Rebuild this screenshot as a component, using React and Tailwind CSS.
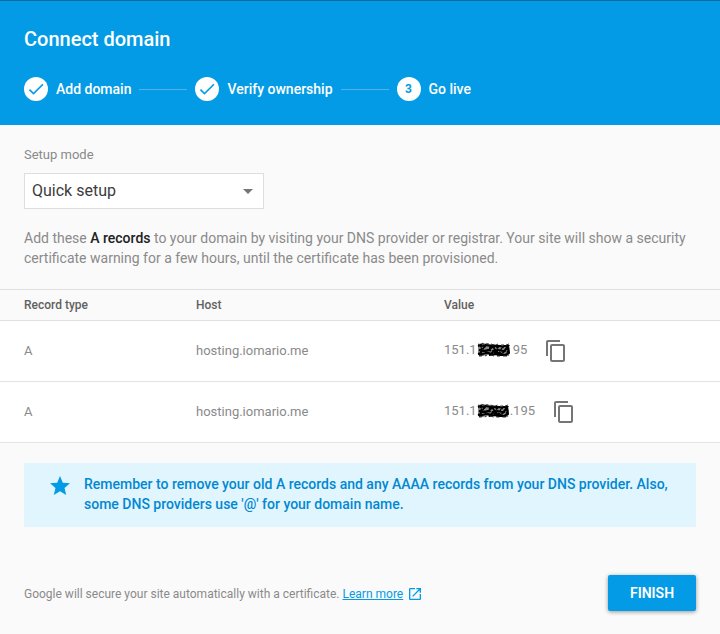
import React from "react";

const records = [
  { id: 1, type: "A", host: "hosting.iomario.me", start: "151.1", end: "95", scribbleClass: "mr-[3px] h-4 w-[33px]" },
  { id: 2, type: "A", host: "hosting.iomario.me", start: "151.1", end: ".195", scribbleClass: "mr-px h-4 w-8" },
];

function StepBadge({ children }) {
  return (
    <span className="flex size-6 shrink-0 items-center justify-center rounded-full bg-white text-xs font-bold text-[#039be5]">
      {children}
    </span>
  );
}

function Check() {
  return (
    <svg viewBox="0 0 24 24" className="size-5" fill="currentColor" aria-hidden="true">
      <path d="M9 16.17 4.83 12l-1.42 1.41L9 19 21 7l-1.41-1.41z" />
    </svg>
  );
}

function Connector() {
  return <span className="mx-2 h-px w-12 bg-[#4fb3ea]" aria-hidden="true" />;
}

function Scribble({ className }) {
  return (
    <svg viewBox="0 0 33 16" preserveAspectRatio="none" className={className} aria-hidden="true">
      <path d="M1 2l5-1 5 1 6 0 6 1 9 0 1 5-1 6-8 0-6-1-7 0-6 1-4-1 0-5z" fill="#888" />
      <path
        d="M1 4l3-1 0 8-3 1M4 4l5-1-3 4 4 4-5 1M9 3l5 1-2 4 4-4 2 4-4 4-5-2M17 4l5 0-4 4 5 3-6 0M23 4l3 1-2 3 3 3M26 4l5 0-3 4 4 3-4 2M31 5l1 6M2 8l5 1 4-1 5 1 5-1 5 1 6-1M2 13l5-1M12 13l8-1M20 13l10 0"
        fill="none"
        stroke="#000"
        strokeWidth="2"
      />
      <path
        d="M1 2l2 1M5 1l3 2M9 2l3 0M14 2l3 1M19 3l2-1M24 3l3 0M29 3l3-1M2 14l3 0M8 14l2-1M14 13l3 1M20 14l3 0M26 14l4 0"
        fill="none"
        stroke="#333"
        strokeWidth="1"
      />
      <path
        d="M3 7l1-2M7 8l1-2M11 6l1 1M14 10l1-2M18 6l2 1M21 10l1-1M25 8l1-2M29 10l1-2"
        fill="none"
        stroke="#999"
        strokeWidth="0.8"
      />
    </svg>
  );
}

function Copy() {
  return (
    <svg viewBox="0 0 24 24" className="size-6" fill="currentColor" aria-hidden="true">
      <path d="M16 1H4c-1.100 0-2 .9-2 2v14h2V3h12V1zm3 4H8c-1.100 0-2 .9-2 2v14c0 1.100.9 2 2 2h11c1.100 0 2-.9 2-2V7c0-1.100-.9-2-2-2zm0 16H8V7h11v14z" />
    </svg>
  );
}

export default function App() {
  return (
    <main className="flex min-h-screen flex-col bg-[#fafafa] font-[Roboto,sans-serif] text-[#8a8a8a]">
      <header className="border-t border-[#0b6a9c] bg-[#039be5] px-6 pt-6 pb-6 text-white">
        <h1 className="text-xl leading-7 font-medium">Connect domain</h1>
        <ol className="mt-6 flex items-center text-sm leading-5 font-medium">
          <li className="flex items-center gap-2">
            <StepBadge><Check /></StepBadge>
            Add domain
          </li>
          <li className="flex items-center">
            <Connector />
            <span className="flex items-center gap-2">
              <StepBadge><Check /></StepBadge>
              Verify ownership
            </span>
          </li>
          <li className="flex items-center" aria-current="step">
            <Connector />
            <span className="flex items-center gap-2">
              <StepBadge>3</StepBadge>
              Go live
            </span>
          </li>
        </ol>
      </header>

      <section className="px-6 pt-5">
        <label htmlFor="mode" className="block text-[13px] leading-5">Setup mode</label>
        <div className="mt-2 grid w-60">
          <select
            id="mode"
            className="col-start-1 row-start-1 h-9 w-full appearance-none border border-[#dedede] bg-white px-[7px] text-base text-[#3c3c3c]"
          >
            <option>Quick setup</option>
          </select>
          <svg
            viewBox="0 0 10 5"
            className="pointer-events-none col-start-1 row-start-1 mr-[11px] h-[5px] w-[10px] self-center justify-self-end"
            fill="#757575"
            aria-hidden="true"
          >
            <path d="M0 0h10L5 5z" />
          </svg>
        </div>
        <p className="mt-[19px] mb-[21px] text-sm leading-5">
          Add these <strong className="font-medium text-[#212121]">A records</strong> to your domain by visiting your DNS
          provider or registrar. Your site will show a security certificate warning for a few hours, until the certificate
          has been provisioned.
        </p>
      </section>

      <table className="w-full table-fixed border-separate border-spacing-0 text-left text-[13px]">
        <thead>
          <tr className="h-8 text-xs text-[#616161]">
            <th className="w-[196px] border-y border-[#e0e0e0] pl-6 font-medium">Record type</th>
            <th className="w-[248px] border-y border-[#e0e0e0] font-medium">Host</th>
            <th className="border-y border-[#e0e0e0] font-medium">Value</th>
          </tr>
        </thead>
        <tbody className="bg-white">
          {records.map((r) => (
            <tr key={r.id} className="h-[61px]">
              <td className="border-b border-[#e3e3e3] pl-6">{r.type}</td>
              <td className="border-b border-[#e3e3e3]">{r.host}</td>
              <td className="border-b border-[#e3e3e3]">
                <div className="flex items-center">
                  <span className="flex items-center pb-0.5">
                    {r.start}
                    <Scribble className={r.scribbleClass} />
                    {r.end}
                  </span>
                  <button type="button" aria-label="Copy value" className="ml-[17px] text-[#757575]">
                    <Copy />
                  </button>
                </div>
              </td>
            </tr>
          ))}
        </tbody>
      </table>

      <aside className="mx-6 mt-5 flex gap-3 bg-[#e1f5fe] pt-[11px] pr-6 pb-[13px] pl-6 text-sm leading-5 font-medium text-[#0288d1]">
        <svg viewBox="0 0 24 24" className="size-6 shrink-0" fill="#039be5" aria-hidden="true">
          <path d="M12 17.270 18.180 21l-1.640-7.030L22 9.240l-7.190-.61L12 2 9.190 8.630 2 9.240l5.460 4.730L5.820 21z" />
        </svg>
        <p>
          Remember to remove your old A records and any AAAA records from your DNS provider. Also, some DNS providers use
          '@' for your domain name.
        </p>
      </aside>

      <footer className="mt-12 flex items-center justify-between px-6 pb-6">
        <p className="flex items-center pt-0.5 text-xs">
          Google will secure your site automatically with a certificate.&nbsp;
          <a href="#learn-more" className="flex items-center gap-1 text-[#039be5]">
            <span className="underline">Learn more</span>
            <svg viewBox="0 0 24 24" className="size-4" fill="currentColor" aria-hidden="true">
              <path d="M19 19H5V5h7V3H5c-1.110 0-2 .9-2 2v14c0 1.100.89 2 2 2h14c1.100 0 2-.9 2-2v-7h-2v7zM14 3v2h3.590l-9.830 9.830 1.410 1.410L19 6.410V10h2V3h-7z" />
            </svg>
          </a>
        </p>
        <button
          type="button"
          className="h-9 w-[88px] rounded-xs bg-[#039be5] text-sm font-semibold text-white shadow-[0_1px_4px_rgba(0,0,0,0.4)]"
        >
          FINISH
        </button>
      </footer>
    </main>
  );
}
